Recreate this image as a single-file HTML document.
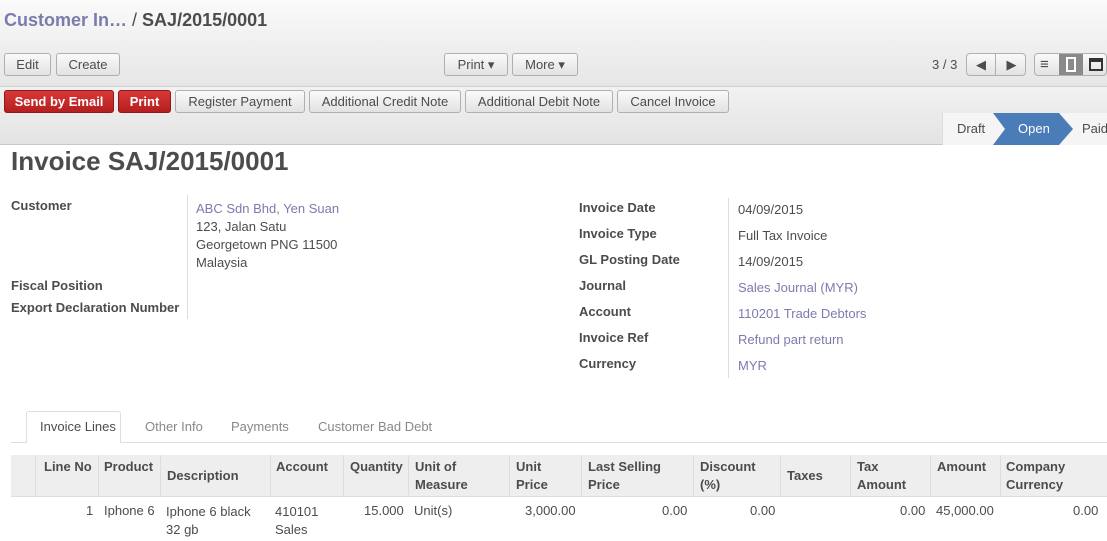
<!DOCTYPE html><html><head><style>
*{box-sizing:border-box}body{margin:0;width:1107px;height:541px;overflow:hidden;font-family:"Liberation Sans",sans-serif;font-size:13px;color:#4c4c4c;background:#fff;position:relative}
.a{position:absolute;white-space:nowrap}
.hdr{position:absolute;left:0;top:0;width:1107px;height:87px;background:linear-gradient(#fafafa,#e6e6e6);border-bottom:1px solid #cfcfcf}
.sb{position:absolute;left:0;top:87px;width:1107px;height:58px;background:linear-gradient(#f2f2f2,#e3e3e3);border-bottom:1px solid #c8c8c8}
.btn{position:absolute;height:23px;border:1px solid #b0b0b0;border-radius:3px;background:linear-gradient(#fafafa,#e2e2e2);font-size:13px;color:#4c4c4c;text-align:center;line-height:21px}
.red{background:linear-gradient(#d83838,#b51f1f);border-color:#8f1818;color:#fff;font-weight:bold}
.lbl{position:absolute;font-weight:bold;color:#4c4c4c}
.lnk{color:#7c7bad}
.th{position:absolute;font-weight:bold;line-height:18px}
.vl{position:absolute;top:455px;width:1px;height:42px;background:#ddd}
</style></head><body>
<div class="hdr"></div>
<div class="a" style="left:4px;top:10px;font-size:18px;font-weight:bold;color:#7c7bad">Customer In… <span style="color:#4c4c4c;font-weight:normal">/</span> <span style="color:#4c4c4c">SAJ/2015/0001</span></div>
<div class="btn" style="left:4px;top:53px;width:47px">Edit</div>
<div class="btn" style="left:56px;top:53px;width:64px">Create</div>
<div class="btn" style="left:444px;top:53px;width:64px">Print ▾</div>
<div class="btn" style="left:512px;top:53px;width:66px">More ▾</div>
<div class="a" style="left:932px;top:57px">3 / 3</div>
<div class="btn" style="left:966px;top:53px;width:60px;border-radius:4px"><span style="position:absolute;left:0;top:0;width:29px;border-right:1px solid #b0b0b0;height:21px">◀</span><span style="position:absolute;left:30px;top:0;width:29px">▶</span></div>
<div class="btn" style="left:1034px;top:53px;width:73px;border-radius:4px;text-align:left">
<span style="position:absolute;left:5px;top:0;font-size:15px">≡</span>
<span style="position:absolute;left:24px;top:0;width:24px;height:21px;background:#8a8a8a"></span><span style="position:absolute;left:31px;top:3px;width:10px;height:15px;border:2px solid #fff"></span>
<span style="position:absolute;left:54px;top:4px;width:14px;height:13px;border:2px solid #333;border-top-width:4px"></span></div>
<div class="sb"></div>
<div class="btn red" style="left:4px;top:90px;width:110px">Send by Email</div>
<div class="btn red" style="left:118px;top:90px;width:53px">Print</div>
<div class="btn" style="left:175px;top:90px;width:130px">Register Payment</div>
<div class="btn" style="left:309px;top:90px;width:152px">Additional Credit Note</div>
<div class="btn" style="left:465px;top:90px;width:148px">Additional Debit Note</div>
<div class="btn" style="left:617px;top:90px;width:112px">Cancel Invoice</div>
<div class="a" style="left:942px;top:113px;width:165px;height:32px;background:#f5f5f5;border-left:1px solid #ddd"></div>
<div class="a" style="left:957px;top:121px">Draft</div>
<svg class="a" style="left:993px;top:113px" width="82" height="32"><polygon points="0,0 66,0 80,16 66,32 0,32 12,16" fill="#4a7cb8"/></svg>
<div class="a" style="left:1018px;top:121px;color:#fff">Open</div>
<div class="a" style="left:1082px;top:121px">Paid</div>
<div class="a" style="left:11px;top:146px;font-size:26px;font-weight:bold;color:#4c4c4c">Invoice SAJ/2015/0001</div>
<div class="lbl" style="left:11px;top:198px">Customer</div>
<div class="lbl" style="left:11px;top:278px">Fiscal Position</div>
<div class="lbl" style="left:11px;top:300px">Export Declaration Number</div>
<div class="a" style="left:187px;top:195px;width:1px;height:124px;background:#ddd"></div>
<div class="a" style="left:196px;top:200px;line-height:18px"><span class="lnk">ABC Sdn Bhd, Yen Suan</span><br>123, Jalan Satu<br>Georgetown PNG 11500<br>Malaysia</div>
<div class="a" style="left:728px;top:198px;width:1px;height:180px;background:#ddd"></div>
<div class="lbl" style="left:579px;top:200px">Invoice Date</div><div class="a" style="left:738px;top:202px">04/09/2015</div>
<div class="lbl" style="left:579px;top:226px">Invoice Type</div><div class="a" style="left:738px;top:228px">Full Tax Invoice</div>
<div class="lbl" style="left:579px;top:252px">GL Posting Date</div><div class="a" style="left:738px;top:254px">14/09/2015</div>
<div class="lbl" style="left:579px;top:278px">Journal</div><div class="a lnk" style="left:738px;top:280px">Sales Journal (MYR)</div>
<div class="lbl" style="left:579px;top:304px">Account</div><div class="a lnk" style="left:738px;top:306px">110201 Trade Debtors</div>
<div class="lbl" style="left:579px;top:330px">Invoice Ref</div><div class="a lnk" style="left:738px;top:332px">Refund part return</div>
<div class="lbl" style="left:579px;top:356px">Currency</div><div class="a lnk" style="left:738px;top:358px">MYR</div>
<div class="a" style="left:11px;top:442px;width:1096px;height:1px;background:#ddd"></div>
<div class="a" style="left:26px;top:411px;width:95px;height:32px;background:#fff;border:1px solid #ddd;border-bottom:none;border-radius:3px 3px 0 0"></div>
<div class="a" style="left:40px;top:419px">Invoice Lines</div>
<div class="a" style="left:145px;top:419px;color:#888">Other Info</div>
<div class="a" style="left:231px;top:419px;color:#888">Payments</div>
<div class="a" style="left:318px;top:419px;color:#888">Customer Bad Debt</div>
<div class="a" style="left:11px;top:455px;width:1096px;height:42px;background:#eee;border-bottom:1px solid #ddd"></div>
<div class="vl" style="left:35px"></div><div class="vl" style="left:98px"></div><div class="vl" style="left:160px"></div><div class="vl" style="left:270px"></div><div class="vl" style="left:343px"></div><div class="vl" style="left:408px"></div><div class="vl" style="left:509px"></div><div class="vl" style="left:581px"></div><div class="vl" style="left:693px"></div><div class="vl" style="left:780px"></div><div class="vl" style="left:850px"></div><div class="vl" style="left:930px"></div><div class="vl" style="left:1000px"></div>
<div class="th" style="left:44px;top:458px">Line No</div>
<div class="th" style="left:104px;top:458px">Product</div>
<div class="th" style="left:167px;top:467px">Description</div>
<div class="th" style="left:276px;top:458px">Account</div>
<div class="th" style="left:350px;top:458px">Quantity</div>
<div class="th" style="left:415px;top:458px">Unit of<br>Measure</div>
<div class="th" style="left:516px;top:458px">Unit<br>Price</div>
<div class="th" style="left:588px;top:458px">Last Selling<br>Price</div>
<div class="th" style="left:700px;top:458px">Discount<br>(%)</div>
<div class="th" style="left:787px;top:467px">Taxes</div>
<div class="th" style="left:857px;top:458px">Tax<br>Amount</div>
<div class="th" style="left:937px;top:458px">Amount</div>
<div class="th" style="left:1006px;top:458px">Company<br>Currency</div>
<div class="a" style="left:86px;top:503px">1</div>
<div class="a" style="left:104px;top:503px">Iphone 6</div>
<div class="a" style="left:166px;top:503px;line-height:18px">Iphone 6 black<br>32 gb</div>
<div class="a" style="left:275px;top:503px;line-height:18px">410101<br>Sales</div>
<div class="a" style="left:364px;top:503px">15.000</div>
<div class="a" style="left:414px;top:503px">Unit(s)</div>
<div class="a" style="left:525px;top:503px">3,000.00</div>
<div class="a" style="left:662px;top:503px">0.00</div>
<div class="a" style="left:750px;top:503px">0.00</div>
<div class="a" style="left:900px;top:503px">0.00</div>
<div class="a" style="left:936px;top:503px">45,000.00</div>
<div class="a" style="left:1073px;top:503px">0.00</div>
</body></html>
